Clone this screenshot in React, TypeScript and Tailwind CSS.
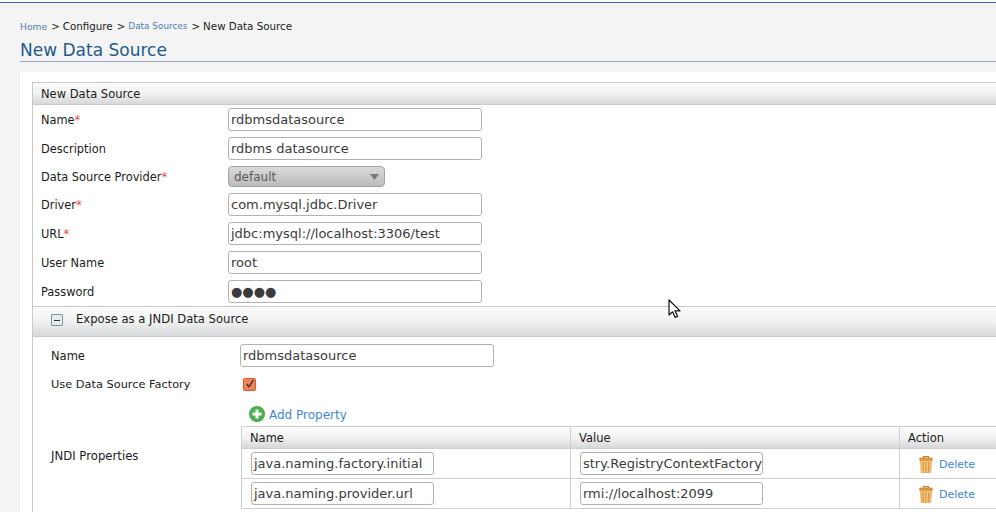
import type { ReactNode } from "react"

const font = "font-['DejaVu_Sans',sans-serif]"
const headerGradient = "bg-gradient-to-b from-[#fbfbfb] via-[#f1f2f2] to-[#d6d8d9]"

function Required() {
  return <span className="text-[#e8484c]">*</span>
}

function TextBox({ value, width = "w-[254px]" }: { value: string; width?: string }) {
  return (
    <div
      className={`${width} h-[23px] shrink-0 overflow-hidden whitespace-nowrap rounded-[3px] border border-[#b5b2ae] bg-white pl-[2px] text-[13px] leading-[21px] text-[#3b3b3b]`}
    >
      {value}
    </div>
  )
}

function FormRow({ label, short, children }: { label: ReactNode; short?: boolean; children: ReactNode }) {
  return (
    <div className={`flex items-center pl-[8px] ${short ? "h-[27px]" : "h-[29px]"}`}>
      <div className="w-[187px] shrink-0 pt-[2px] text-[11.4px] text-[#1c1c1c]">{label}</div>
      {children}
    </div>
  )
}

function TrashIcon() {
  return (
    <svg width="14" height="17" viewBox="0 0 14 17" className="-mt-[2px] shrink-0">
      <path d="M4.5 2V0.7h5V2" fill="none" stroke="#c47f2e" strokeWidth="1.2" />
      <rect x="0.5" y="2" width="13" height="2.6" rx="1" fill="#e09a3e" stroke="#c47f2e" strokeWidth="0.6" />
      <path d="M1.5 4.6h11l-.7 11.2a1 1 0 0 1-1 .9H3.2a1 1 0 0 1-1-.9z" fill="#f6c77e" stroke="#d08a35" strokeWidth="0.6" />
      <path d="M4.2 6v9.4M7 6v9.4M9.8 6v9.4" stroke="#d98f36" strokeWidth="1.2" />
    </svg>
  )
}

function PropertyRow({ name, value }: { name: string; value: string }) {
  return (
    <div className="flex h-[30px] border-b border-[#cfcfcf]">
      <div className="flex w-[329px] shrink-0 items-center border-l border-[#cfcfcf] pl-[9px]">
        <TextBox value={name} width="w-[183px]" />
      </div>
      <div className="flex w-[329px] shrink-0 items-center border-l border-[#cfcfcf] pl-[9px]">
        <TextBox value={value} width="w-[183px]" />
      </div>
      <div className="flex flex-1 items-center gap-[6px] border-l border-[#cfcfcf] pl-[19px] pt-[3px] text-[11px] text-[#3f87d6]">
        <TrashIcon />
        Delete
      </div>
    </div>
  )
}

export default function App() {
  return (
    <div className={`h-[512px] w-[996px] overflow-hidden bg-[#f4f4f4] ${font}`}>
      <div className="h-[3px] border-b border-[#2f69a8] bg-white" />

      {/* breadcrumb and title */}
      <div className="mt-[15px] flex h-[17px] items-center pl-[20px] pt-[1px] text-[10.3px] text-[#1c1c1c]">
        <span className="text-[9.2px] text-[#4f7fb5]">Home</span>
        <span className="ml-[4px] mr-[3px]">&gt;</span>
        Configure
        <span className="ml-[4px] mr-[3px]">&gt;</span>
        <span className="text-[8.9px] text-[#4f7fb5]">Data Sources</span>
        <span className="ml-[4px] mr-[3px]">&gt;</span>
        New Data Source
      </div>
      <div className="ml-[20px] mt-[1px] h-[26px] border-b border-[#9aa6cb] text-[17px] leading-[28px] text-[#1f5c8c]">
        New Data Source
      </div>

      {/* white panel */}
      <div className="ml-[20px] mt-[10px] h-[440px] bg-white pl-[12px] pt-[10px]">
        <div className="h-[440px] w-[1000px] border-l border-t border-[#c9c9c9]">
          <div className={`h-[22px] border-b border-[#c9c9c9] pl-[8px] text-[11.5px] leading-[22px] text-[#1c1c1c] ${headerGradient}`}>
            New Data Source
          </div>

          <FormRow label={<>Name<Required /></>}>
            <TextBox value="rdbmsdatasource" />
          </FormRow>
          <FormRow label="Description">
            <TextBox value="rdbms datasource" />
          </FormRow>
          <FormRow short label={<>Data Source Provider<Required /></>}>
            <div className="flex h-[21px] w-[157px] items-center justify-between rounded-[4px] border border-[#a3a3a3] bg-gradient-to-b from-[#dadada] to-[#bcbcbc] pl-[5px] pr-[5px] text-[12px] text-[#5a5a5a]">
              default
              <svg width="9" height="6" viewBox="0 0 9 6">
                <path d="M0 0h9L4.5 6z" fill="#777" />
              </svg>
            </div>
          </FormRow>
          <FormRow label={<>Driver<Required /></>}>
            <TextBox value="com.mysql.jdbc.Driver" />
          </FormRow>
          <FormRow label={<>URL<Required /></>}>
            <TextBox value="jdbc:mysql://localhost:3306/test" />
          </FormRow>
          <FormRow label="User Name">
            <TextBox value="root" />
          </FormRow>
          <FormRow label="Password">
            <TextBox value="●●●●" />
          </FormRow>

          {/* JNDI section */}
          <div className={`flex h-[31px] items-center border-y border-[#c9c9c9] pb-[3px] pl-[18px] text-[11.6px] text-[#1c1c1c] ${headerGradient}`}>
            <div className="flex h-[12px] w-[12px] items-center justify-center rounded-[1px] border border-[#6f9aa5] bg-[#e4ecec]">
              <div className="h-px w-[6px] bg-[#333]" />
            </div>
            <span className="ml-[13px]">Expose as a JNDI Data Source</span>
          </div>

          <div className="pl-[18px] pt-[4px]">
            <div className="flex h-[29px] items-center">
              <div className="w-[189px] shrink-0 pt-[2px] text-[11.5px] text-[#1c1c1c]">Name</div>
              <TextBox value="rdbmsdatasource" />
            </div>
            <div className="flex h-[29px] items-center">
              <div className="w-[192px] shrink-0 text-[11.35px] text-[#1c1c1c]">Use Data Source Factory</div>
              <div className="flex h-[13px] w-[13px] items-center justify-center rounded-[2px] border border-[#c8623a] bg-[#ee8458] shadow-[0_0_2px_#c9c9c9]">
                <svg width="13" height="12" viewBox="0 0 13 12" className="-mt-[2px] ml-[1px]">
                  <path d="M2 6l3 3.5L11 1" fill="none" stroke="#4e3a32" strokeWidth="2" />
                </svg>
              </div>
            </div>

            <div className="flex">
              <div className="flex w-[190px] shrink-0 items-center pt-[5px] text-[11.7px] text-[#1c1c1c]">JNDI Properties</div>
              <div className="flex-1">
                <div className="flex h-[27px] items-center gap-[4px] pl-[8px] pt-[2px] text-[12px] text-[#3f87d6]">
                  <svg width="16" height="16" viewBox="0 0 16 16" className="shrink-0">
                    <circle cx="8" cy="8" r="8" fill="#4cae4f" />
                    <path d="M8 3.5v9M3.5 8h9" stroke="#fff" strokeWidth="3" />
                  </svg>
                  <span className="pt-[2px]">Add Property</span>
                </div>
                <div className="border-t border-[#cfcfcf]">
                  <div className={`flex h-[22px] border-b border-[#cfcfcf] text-[11.5px] leading-[23px] text-[#1c1c1c] ${headerGradient}`}>
                    <div className="w-[329px] shrink-0 border-l border-[#cfcfcf] pl-[8px]">Name</div>
                    <div className="w-[329px] shrink-0 border-l border-[#cfcfcf] pl-[8px]">Value</div>
                    <div className="flex-1 border-l border-[#cfcfcf] pl-[8px]">Action</div>
                  </div>
                  <PropertyRow name="java.naming.factory.initial" value="stry.RegistryContextFactory" />
                  <PropertyRow name="java.naming.provider.url" value="rmi://localhost:2099" />
                </div>
              </div>
            </div>
          </div>
        </div>
      </div>

      {/* mouse pointer captured in the screenshot */}
      <svg width="14" height="20" viewBox="0 0 14 20" className="absolute left-[668px] top-[299px]">
        <path d="M1 1v15l3.6-3.2 2.6 5.6 2.4-1.1-2.6-5.4H12z" fill="#fff" stroke="#111" strokeWidth="1.2" strokeLinejoin="round" />
      </svg>
    </div>
  )
}
